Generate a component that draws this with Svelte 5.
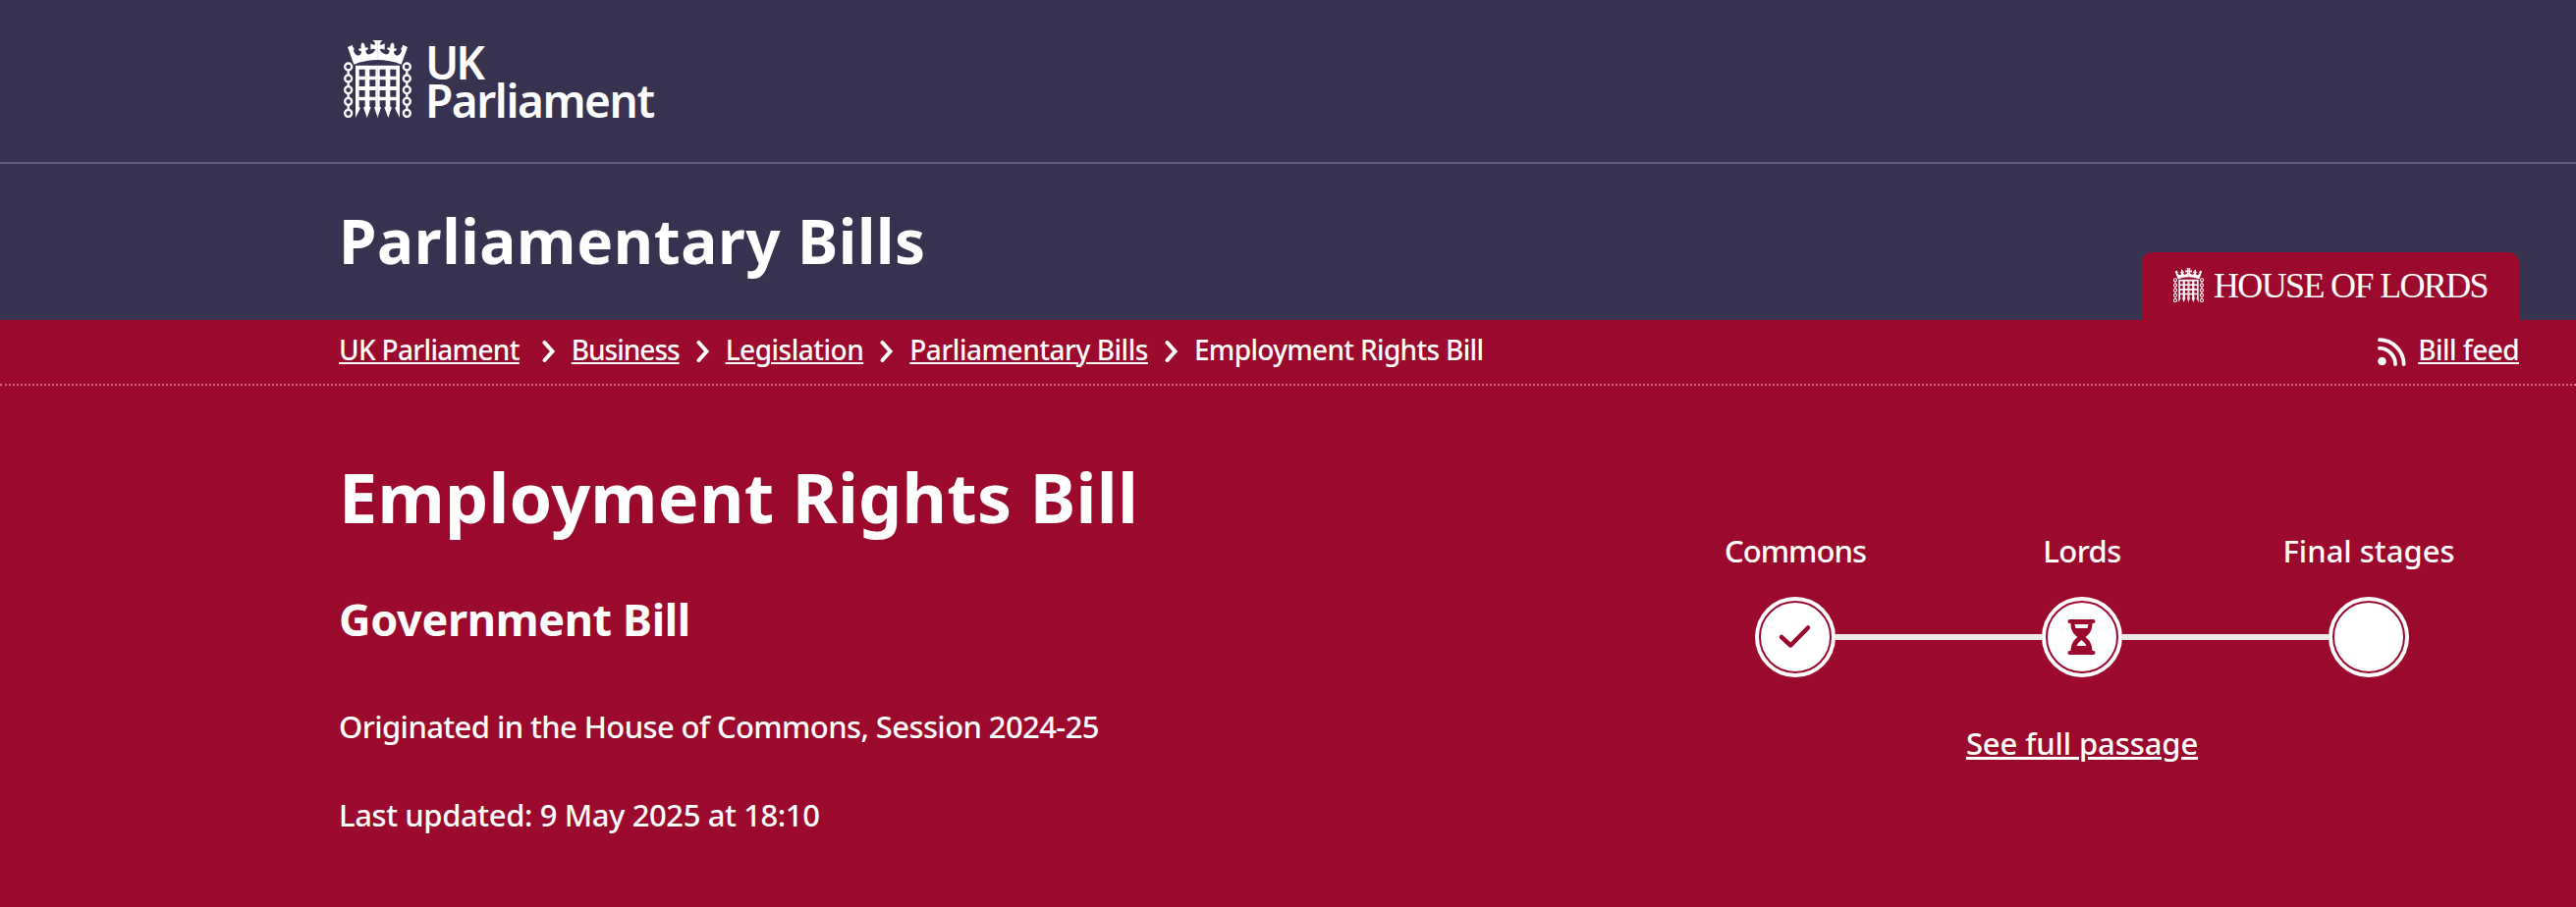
<script lang="ts">
    type Crumb = { label: string; href?: string; tracking: number };

    const crumbs: Crumb[] = [
        { label: "UK Parliament", href: "#uk-parliament", tracking: -0.68 },
        { label: "Business", href: "#business", tracking: -1 },
        { label: "Legislation", href: "#legislation", tracking: -0.5 },
        { label: "Parliamentary Bills", href: "#bills", tracking: -0.46 },
        { label: "Employment Rights Bill", tracking: -0.68 }
    ];

    const stages = [
        { name: "Commons", status: "complete", tracking: -0.95 },
        { name: "Lords", status: "current", tracking: -0.6 },
        { name: "Final stages", status: "pending", tracking: 0 }
    ];

    const chainLinks = [114, 150, 185, 220, 256];
</script>

{#snippet crestHalf()}
    <!-- crown -->
    <path d="M42 54 L57 47 L58 55 L62 57 L60 66 Q63 76 73 80 Q83 79 84 70 L83 65 Q77 68 75 61 Q78 56 84 58 Q80 48 87 40 Q97 46 95 56 Q102 52 105 58 Q104 64 97 64 L99 72 Q102 77 109 76 Q122 73 127 61 Q121 57 112 62 L112 43 Q121 49 127 46 Q126 39 118 33 H134 V93 Q96 93 61 107 Z" />
    <!-- grille -->
    <path d="M66 110 H134 V270 L123 238 L127 236 V217 H109 V236 L113 238 L101 270 L90 238 L95 236 V217 H77 V236 L81 240 L66 270 Z M77 122 V143 H95 V122 Z M109 122 V143 H127 V122 Z M77 154 V174 H95 V154 Z M109 154 V174 H127 V154 Z M77 186 V206 H95 V186 Z M109 186 V206 H127 V186 Z" fill-rule="evenodd" />
    {#each chainLinks as y, i}
        <circle cx="44" cy={y} r="10.5" fill="none" stroke="#fff" stroke-width="7" />
        {#if i > 0}
            <path d="M40.5 {y - 25} h7 v14 h-7 z" />
        {/if}
    {/each}
{/snippet}

{#snippet crest(cls: string)}
    <svg class={cls} viewBox="24 24 219 252" preserveAspectRatio="none" fill="#fff" aria-hidden="true">
        <g>{@render crestHalf()}</g>
        <g transform="translate(267 0) scale(-1 1)">{@render crestHalf()}</g>
    </svg>
{/snippet}

<div class="page">
    <header>
        <div class="brand">
            {@render crest("crest")}
            <div class="wordmark">
                <span class="uk">UK</span>
                <span>Parliament</span>
            </div>
        </div>
        <div class="site">
            <div class="site-title">Parliamentary Bills</div>
            <div class="house-tab">
                {@render crest("crest-small")}
                <span>HOUSE OF LORDS</span>
            </div>
        </div>
    </header>

    <nav class="bar">
        <ol class="crumbs">
            {#each crumbs as crumb, i}
                <li style="letter-spacing: {crumb.tracking}px">
                    {#if i > 0}
                        <svg class="chevron" viewBox="0 0 13 22">
                            <path d="M2.5 2 L10.5 11 L2.5 20" />
                        </svg>
                    {/if}
                    {#if crumb.href}
                        <a href={crumb.href}>{crumb.label}</a>
                    {:else}
                        <span>{crumb.label}</span>
                    {/if}
                </li>
            {/each}
        </ol>
        <div class="feed">
            <svg class="rss" viewBox="0 0 29 29">
                <circle cx="4.5" cy="24" r="4.3" fill="#fff" />
                <path d="M2 10.7 A16.5 16.5 0 0 1 18 27 M2 2.2 A25 25 0 0 1 26.6 27" />
            </svg>
            <a href="#feed">Bill feed</a>
        </div>
    </nav>

    <main>
        <section class="details">
            <h1>Employment Rights Bill</h1>
            <h2>Government Bill</h2>
            <p class="origin">Originated in the House of Commons, Session 2024-25</p>
            <p class="updated">Last updated: 9 May 2025 at 18:10</p>
        </section>

        <section class="passage">
            <div class="labels">
                {#each stages as stage}
                    <span style="letter-spacing: {stage.tracking}px">{stage.name}</span>
                {/each}
            </div>
            <div class="track">
                {#each stages as stage, i}
                    {#if i > 0}
                        <div class="line"></div>
                    {/if}
                    <svg class="stage" viewBox="0 0 82 82">
                        <circle cx="41" cy="41" r="41" fill="#fff" />
                        <circle cx="41" cy="41" r="36" fill="none" stroke="#9b0a2d" stroke-width="2" />
                        {#if stage.status === "complete"}
                            <path class="tick" d="M27 41 L36.3 49.5 L54 31.5" />
                        {:else if stage.status === "current"}
                            <path
                                fill="#9b0a2d"
                                fill-rule="evenodd"
                                d="M28.5 23 H52.5 A2 2 0 0 1 52.5 27 H51.5 C51.5 34 49 37.5 44.5 41 C49 44.5 51 48 51.5 55 H52.5 A2 2 0 0 1 52.5 59 H28.5 A2 2 0 0 1 28.5 55 H29.5 C30 48 32 44.5 36.5 41 C32 37.5 29.5 34 29.5 27 H28.5 A2 2 0 0 1 28.5 23 Z M33.5 28 L34.5 32 H46.5 L47.5 28 Z M40.5 44 Q37 46.5 35.5 50 H45.5 Q44 46.5 40.5 44 Z"
                            />
                        {/if}
                    </svg>
                {/each}
            </div>
            <a class="full" href="#stages">See full passage</a>
        </section>
    </main>
</div>

<style>
    :global(body) {
        background: #9b0a2d;
    }

    .page {
        height: 924px;
        box-sizing: border-box;
        overflow: hidden;
        background: #9b0a2d;
        color: #fff;
        font-family: "Noto Sans", "Open Sans", sans-serif;
    }

    a {
        color: inherit;
        text-decoration: underline;
        text-decoration-thickness: 2px;
        text-underline-offset: 2px;
    }

    header {
        background: #383251;
    }

    .brand {
        display: flex;
        box-sizing: border-box;
        height: 167px;
        padding: 38px 0 0 348px;
        border-bottom: 2px solid #625a7c;
    }

    .crest {
        width: 73px;
        height: 84px;
    }

    .wordmark {
        display: flex;
        flex-direction: column;
        margin: 6px 0 0 12px;
        font-size: 46px;
        font-weight: 600;
        line-height: 39px;
        letter-spacing: -1.45px;
    }

    .uk {
        letter-spacing: -3px;
    }

    .site {
        display: flex;
        justify-content: space-between;
        align-items: flex-end;
        height: 159px;
        padding: 0 58px 0 345px;
    }

    .site-title {
        align-self: flex-start;
        margin-top: 38px;
        font-size: 62px;
        font-weight: 700;
        line-height: 80px;
        letter-spacing: 0.6px;
    }

    .house-tab {
        display: flex;
        box-sizing: border-box;
        width: 384px;
        height: 69px;
        padding: 15px 0 0 31px;
        border-radius: 10px 10px 0 0;
        background: #9b0a2d;
        font-family: "Liberation Serif", serif;
        font-size: 36px;
        line-height: 38px;
        letter-spacing: -1.65px;
        white-space: nowrap;
    }

    .crest-small {
        width: 33px;
        height: 37px;
        margin-right: 9px;
    }

    .bar {
        display: flex;
        justify-content: space-between;
        box-sizing: border-box;
        height: 67px;
        padding: 0 58px 0 345px;
        border-bottom: 2px dotted #dc6484;
        font-size: 28px;
        font-weight: 500;
        line-height: 60px;
    }

    .crumbs {
        display: flex;
        margin: 0;
        padding: 0;
        list-style: none;
    }

    .crumbs li {
        display: flex;
        align-items: center;
        height: 60px;
    }

    .crumbs li:first-child {
        margin-right: 6px;
    }

    .chevron {
        width: 13px;
        height: 22px;
        margin: 4px 17px 0;
    }

    .chevron path {
        fill: none;
        stroke: #fff;
        stroke-width: 4;
        stroke-linecap: round;
    }

    .feed {
        display: flex;
        letter-spacing: -0.55px;
    }

    .rss {
        width: 29px;
        height: 29px;
        margin: 18px 12px 0 0;
    }

    .rss path {
        fill: none;
        stroke: #fff;
        stroke-width: 3.8;
        stroke-linecap: round;
    }

    main {
        display: flex;
        justify-content: space-between;
        padding: 68px 65px 0 345px;
    }

    h1,
    h2,
    p {
        margin: 0;
    }

    h1 {
        font-size: 70px;
        line-height: 90px;
        letter-spacing: 0.25px;
    }

    h2 {
        margin-top: 50px;
        font-size: 45px;
        line-height: 60px;
        letter-spacing: -0.35px;
    }

    p {
        font-size: 31px;
        font-weight: 500;
        line-height: 42px;
    }

    .origin {
        margin-top: 58px;
        letter-spacing: -0.6px;
    }

    .updated {
        margin-top: 48px;
        letter-spacing: -0.4px;
    }

    .passage {
        width: 876px;
        padding-top: 79px;
        font-size: 31px;
        font-weight: 500;
        line-height: 42px;
        text-align: center;
    }

    .labels {
        display: grid;
        grid-template-columns: repeat(3, 1fr);
    }

    .track {
        display: flex;
        align-items: center;
        margin: 26px 105px 46px;
    }

    .stage {
        width: 82px;
        height: 82px;
    }

    .tick {
        fill: none;
        stroke: #9b0a2d;
        stroke-width: 4.5;
        stroke-linecap: round;
        stroke-linejoin: round;
    }

    .line {
        flex: 1;
        height: 6px;
        background: #ebe8e8;
    }

    .full {
        letter-spacing: -0.1px;
        text-decoration-thickness: 3px;
    }
</style>
